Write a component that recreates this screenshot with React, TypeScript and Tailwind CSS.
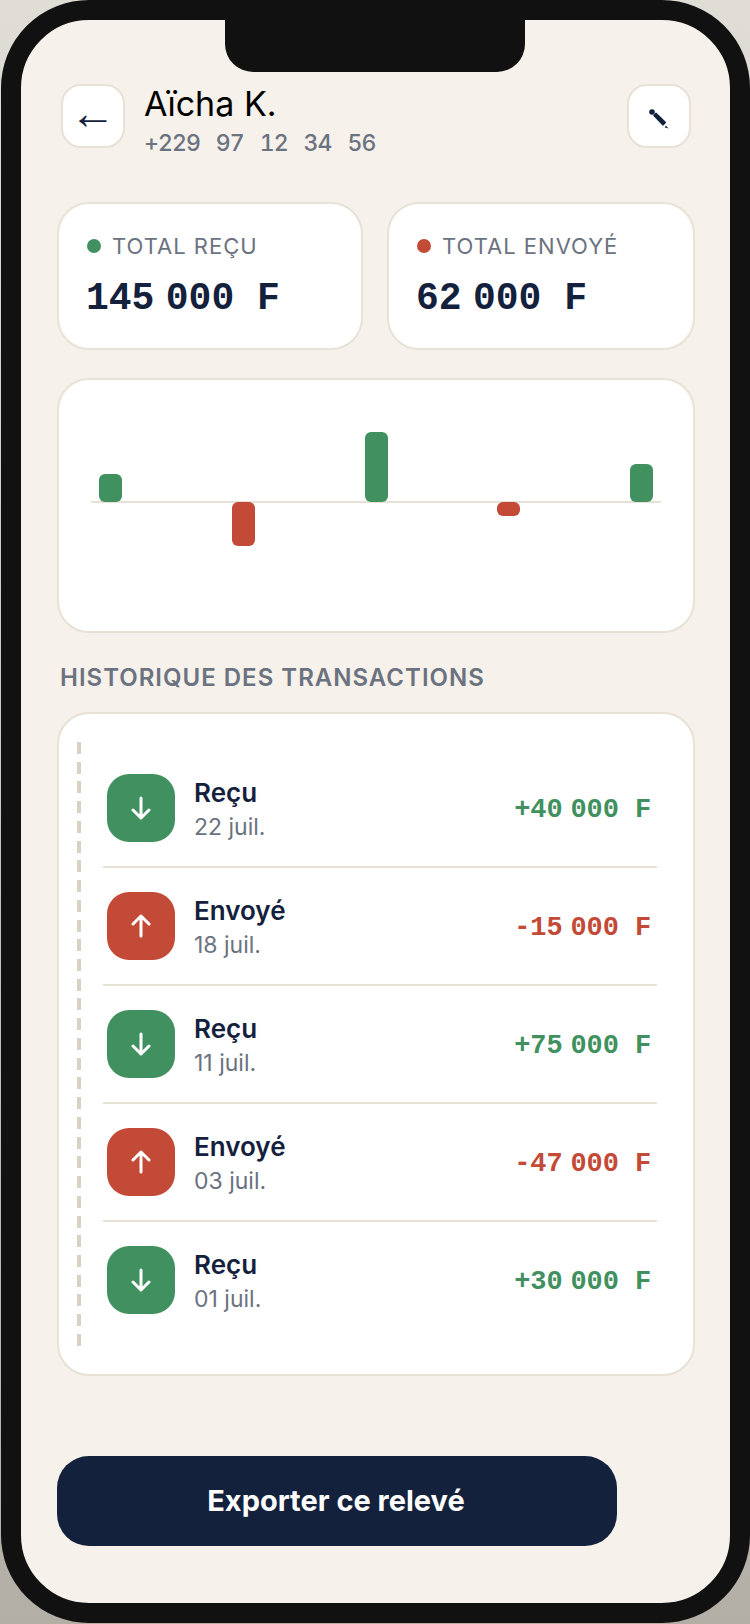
import React from "react";

const GREEN = "bg-[#40915f]";
const RED = "bg-[#c44a38]";

const bars = [
  { value: 28, up: true },
  { value: 44, up: false },
  { value: 70, up: true },
  { value: 14, up: false },
  { value: 38, up: true },
];

const transactions = [
  { label: "Reçu", date: "22 juil.", amount: "+40\u202f000 F", up: false },
  { label: "Envoyé", date: "18 juil.", amount: "-15\u202f000 F", up: true },
  { label: "Reçu", date: "11 juil.", amount: "+75\u202f000 F", up: false },
  { label: "Envoyé", date: "03 juil.", amount: "-47\u202f000 F", up: true },
  { label: "Reçu", date: "01 juil.", amount: "+30\u202f000 F", up: false },
];

function Arrow({ up }: { up: boolean }) {
  return (
    <svg width="22" height="24" viewBox="0 0 22 24" fill="none" stroke="#fff" strokeWidth="3" strokeLinecap="round" strokeLinejoin="round" className={up ? "rotate-180" : ""}>
      <path d="M11 2V22M3 14l8 8 8-8" />
    </svg>
  );
}

// solid pencil, eraser top left and point bottom right
function Pencil() {
  return (
    <svg width="20" height="20" viewBox="0 0 20 20" className="mt-[6px]">
      <circle cx="3" cy="3" r="2.8" fill="#14213d" />
      <path d="M5.2 6.4L7 4.6 16 13.4 14 15.6Z" fill="#14213d" stroke="#14213d" strokeWidth="2" strokeLinejoin="round" />
      <path d="M16.8 16.6L19.5 19.5 15.8 18.6Z" fill="#14213d" />
    </svg>
  );
}

function TotalCard({ dot, label, value, width }: { dot: string; label: string; value: string; width: string }) {
  return (
    <div className={`${width} h-[148px] bg-white border-2 border-[#e8e2d6] rounded-[32px] pl-[27px] pt-[28px]`}>
      <div className="flex items-center gap-[11px] h-[28px]">
        <span className={`ml-px w-[14px] h-[14px] rounded-full ${dot}`}></span>
        <span className="text-[22px] tracking-[1px] text-[#6b7280]">{label}</span>
      </div>
      <div className="mt-[17px] font-['Liberation_Mono',monospace] font-bold text-[38px] leading-[44px] text-[#14213d]">{value}</div>
    </div>
  );
}

export default function App() {
  return (
    <div className="w-[750px] h-[1624px] bg-linear-to-b from-[#e0ddd6] to-[#b3afa6] pl-px pb-px font-['Inter',sans-serif]">
      <div className="relative w-[749px] h-[1623px] border-[20px] border-[#111111] rounded-[88px] bg-[#f6f1ea] overflow-hidden">
        {/* notch */}
        <div className="absolute left-[204px] top-0 w-[300px] h-[52px] bg-[#111111] rounded-b-[28px]"></div>

        <div className="pt-[64px] pl-[36px] pr-[35px]">
          {/* Header */}
          <div className="flex items-start justify-between px-1 h-[64px]">
            <div className="flex items-start gap-[19px]">
              <button className="w-[64px] h-[64px] flex items-center justify-center pb-[6px] bg-white border-2 border-[#e8e2d6] rounded-[20px] font-['Liberation_Sans',sans-serif] text-[46px] leading-none text-[#14213d]">←</button>
              <div className="pt-[1px]">
                <div className="text-[34px] leading-[38px] text-black">Aïcha K.</div>
                <div className="mt-[5px] text-[23px] leading-[30px] font-medium tabular-nums tracking-[-0.9px] [word-spacing:2.65px] text-[#6b7280] whitespace-pre">+229  97  12  34  56</div>
              </div>
            </div>
            <button className="w-[64px] h-[64px] flex items-center justify-center bg-white border-2 border-[#e8e2d6] rounded-[20px]">
              <Pencil />
            </button>
          </div>

          {/* Totals */}
          <div className="flex gap-[24px] mt-[54px]">
            <TotalCard width="w-[306px]" dot={GREEN} label="TOTAL REÇU" value={"145\u202f000 F"} />
            <TotalCard width="flex-1" dot={RED} label="TOTAL ENVOYÉ" value={"62\u202f000 F"} />
          </div>

          {/* Balance chart */}
          <div className="mt-[28px] h-[255px] bg-white border-2 border-[#e8e2d6] rounded-[32px] px-[32px]">
            <div className="flex items-end justify-between px-2 h-[122px]">
              {bars.map((b, i) => (
                <div key={i} className={`w-[23px] rounded-[6px] relative z-10 ${b.up ? GREEN : ""}`} style={{ height: b.up ? b.value : 0 }}></div>
              ))}
            </div>
            <div className="h-[2px] -my-px bg-[#e8e2d6]"></div>
            <div className="flex items-start justify-between px-2">
              {bars.map((b, i) => (
                <div key={i} className={`w-[23px] rounded-[6px] relative z-10 ${b.up ? "" : RED}`} style={{ height: b.up ? 0 : b.value }}></div>
              ))}
            </div>
          </div>

          <h3 className="mt-[29px] pl-[3px] text-[24px] leading-[32px] font-semibold tracking-[1px] text-[#6b7280]">HISTORIQUE DES TRANSACTIONS</h3>

          {/* Transactions */}
          <div className="mt-[18px] h-[664px] flex bg-white border-2 border-[#e8e2d6] rounded-[32px] pl-[18px] pr-[36px] py-[28px]">
            <div className="w-1 shrink-0 bg-[repeating-linear-gradient(to_bottom,#d8d2c4_0,#d8d2c4_12px,transparent_12px,transparent_19.73px)]"></div>
            <div className="flex-1 ml-[22px] py-2">
              {transactions.map((t, i) => (
                <div key={i} className={`flex items-center justify-between pl-1 pr-[6px] py-6 ${i < transactions.length - 1 ? "border-b-2 border-[#e8e2d6]" : ""}`}>
                  <div className="flex items-center gap-[19px]">
                    <div className={`w-[68px] h-[68px] rounded-[22px] flex items-center justify-center ${t.up ? RED : GREEN}`}>
                      <Arrow up={t.up} />
                    </div>
                    <div className="pt-[2px]">
                      <div className="text-[26px] leading-[32px] font-semibold text-[#14213d]">{t.label}</div>
                      <div className="mt-[4px] text-[23px] leading-[28px] text-[#6b7280]">{t.date}</div>
                    </div>
                  </div>
                  <div className={`pt-[4px] font-['Liberation_Mono',monospace] font-bold text-[27px] tracking-[-0.1px] ${t.up ? "text-[#c44a38]" : "text-[#40915f]"}`}>{t.amount}</div>
                </div>
              ))}
            </div>
          </div>

          <button className="mt-[80px] w-[560px] h-[90px] pr-[2px] bg-[#14213d] rounded-[32px] text-white text-[29px] font-bold">Exporter ce relevé</button>
        </div>
      </div>
    </div>
  );
}
